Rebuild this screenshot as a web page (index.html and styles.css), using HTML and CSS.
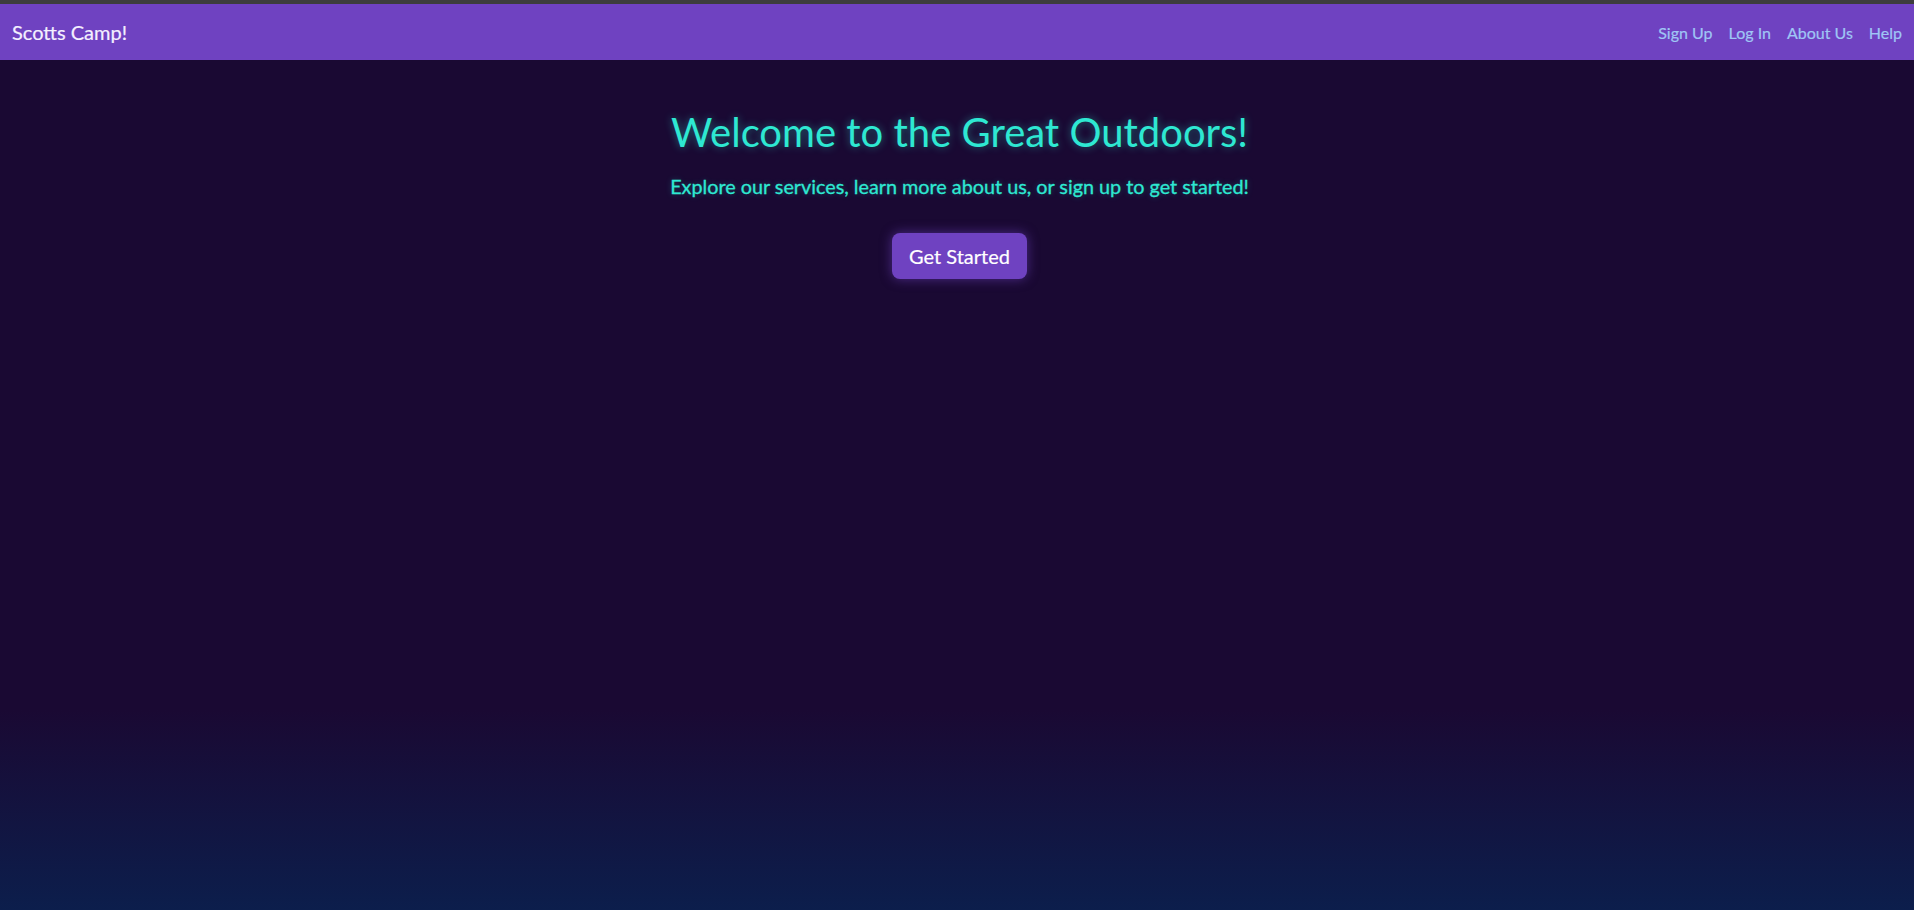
FILE: index.html
```html
<!DOCTYPE html>
<html lang="en">
<head>
<meta charset="utf-8">
<title>Scotts Camp!</title>
<link rel="stylesheet" href="styles.css">
</head>
<body>
<div class="topstrip"></div>
<nav class="navbar">
  <a class="brand" href="#">Scotts Camp!</a>
  <ul class="nav-links">
    <li><a href="#">Sign Up</a></li>
    <li><a href="#">Log In</a></li>
    <li><a href="#">About Us</a></li>
    <li><a href="#">Help</a></li>
  </ul>
</nav>
<main class="hero">
  <h1 class="hero-title">Welcome to the Great Outdoors!</h1>
  <p class="hero-sub">Explore our services, learn more about us, or sign up to get started!</p>
  <a class="btn" href="#">Get Started</a>
</main>
</body>
</html>
```

FILE: styles.css
```css
html, body {
  margin: 0;
  padding: 0;
  height: 100%;
}
body {
  font-family: Lato, "Open Sans", sans-serif;
  background: linear-gradient(to bottom, #1a0933 0%, #1a0933 78%, #0c1e4c 100%);
  min-height: 910px;
}
.topstrip {
  height: 4px;
  background: #3d3d3d;
}
.navbar {
  height: 56px;
  background: #6f42c1;
  display: flex;
  align-items: center;
  justify-content: space-between;
  padding: 0 12px;
}
.brand {
  color: #f4f0ff;
  font-size: 20px;
  text-decoration: none;
  -webkit-text-stroke: 0.2px #f4f0ff;
}
.nav-links {
  list-style: none;
  display: flex;
  gap: 16px;
  margin: 0;
  padding: 0;
}
.nav-links a {
  color: #9fc6f5;
  font-size: 16px;
  text-decoration: none;
  -webkit-text-stroke: 0.2px #9fc6f5;
}
.hero {
  display: flex;
  flex-direction: column;
  align-items: center;
  padding-top: 48px;
  padding-left: 5px;
}
.hero-title {
  margin: 0;
  font-weight: 400;
  font-size: 40px;
  line-height: 1.2;
  color: #2ee8d2;
  text-shadow: 0 0 8px rgba(46, 232, 210, 0.45);
}
.hero-sub {
  margin: 18px 0 0;
  font-size: 19.8px;
  color: #2ee8d2;
  -webkit-text-stroke: 0.3px #2ee8d2;
  text-shadow: 0 0 6px rgba(46, 232, 210, 0.3);
}
.btn {
  margin-top: 35px;
  display: inline-block;
  background: #6f42c1;
  color: #fff;
  font-size: 20px;
  line-height: 24px;
  text-decoration: none;
  padding: 11px 17px;
  border-radius: 8px;
  -webkit-text-stroke: 0.2px #fff;
  box-shadow: 0 0 12px rgba(111, 66, 193, 0.6);
}
```
